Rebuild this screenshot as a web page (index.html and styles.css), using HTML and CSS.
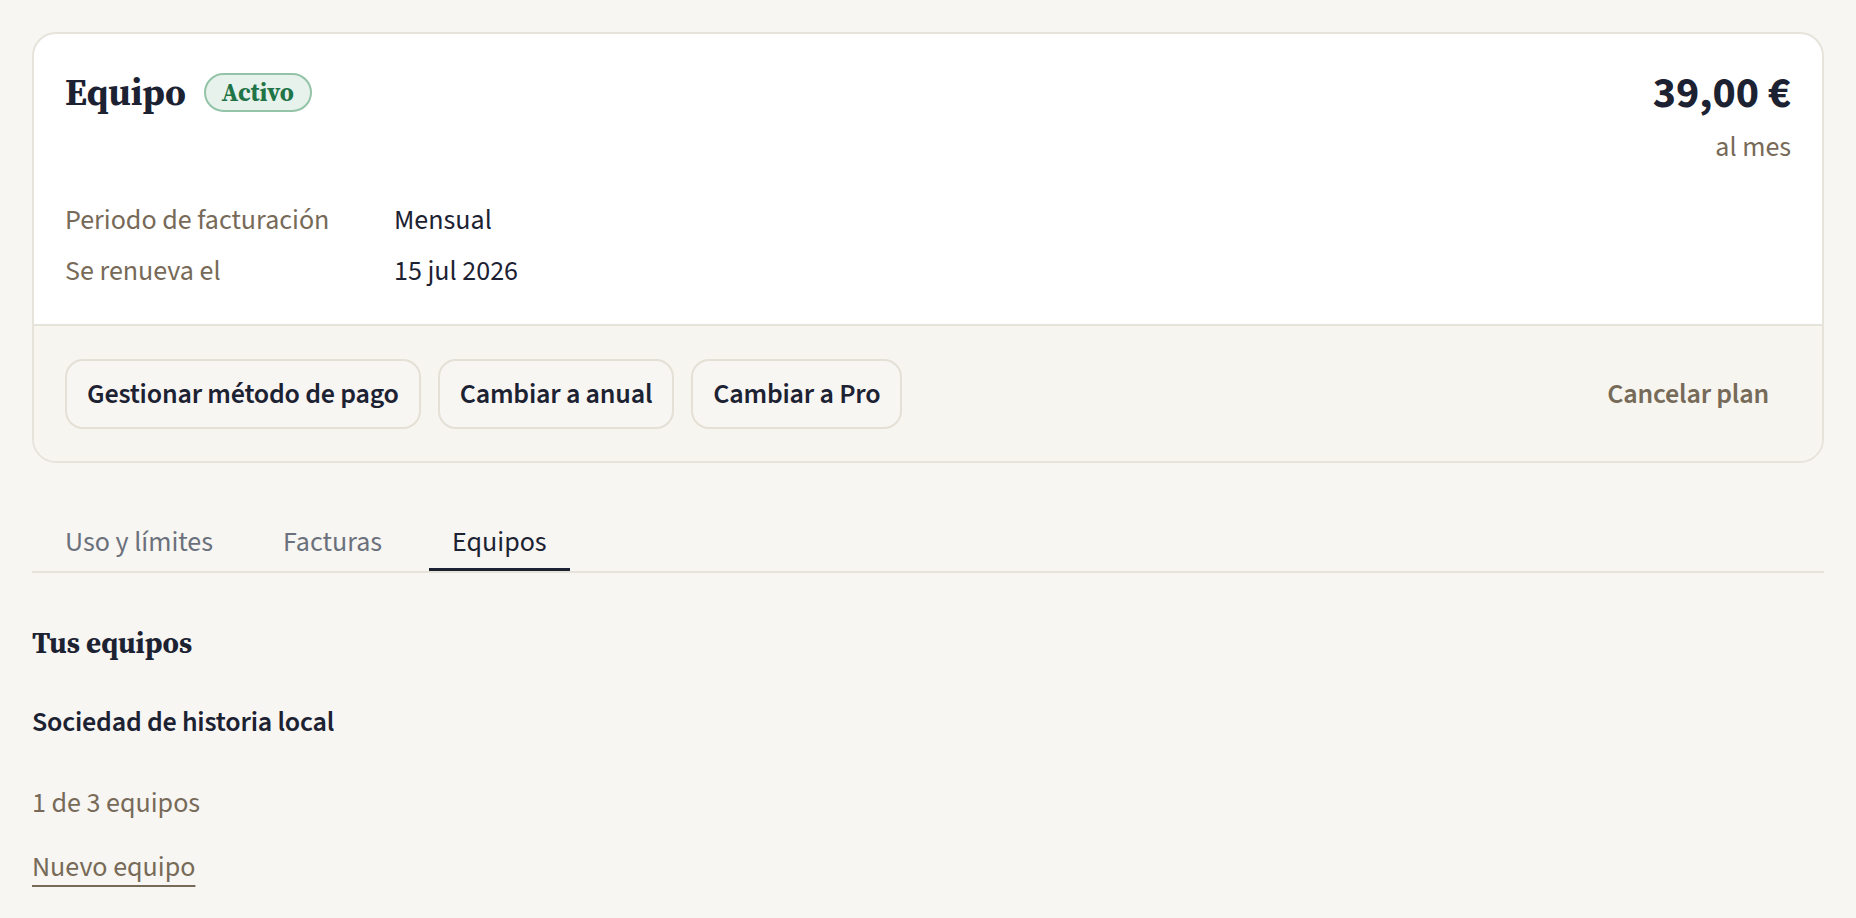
FILE: index.html
```html
<!DOCTYPE html>
<html lang="es">
<head>
  <meta charset="utf-8">
  <link rel="stylesheet" href="styles.css">
</head>
<body>
  <div class="page">
    <section class="plan-card">
      <div class="plan-main">
        <div class="plan-head">
          <div class="plan-title">
            <h1>Equipo</h1>
            <span class="badge">Activo</span>
          </div>
          <div class="plan-price">
            <div class="amount">39,00&nbsp;€</div>
            <div class="period">al mes</div>
          </div>
        </div>

        <dl class="plan-details">
          <div class="detail-row">
            <dt>Periodo de facturación</dt>
            <dd>Mensual</dd>
          </div>
          <div class="detail-row">
            <dt>Se renueva el</dt>
            <dd>15 jul 2026</dd>
          </div>
        </dl>
      </div>

      <div class="plan-actions">
        <button type="button" class="btn">Gestionar método de pago</button>
        <button type="button" class="btn">Cambiar a anual</button>
        <button type="button" class="btn">Cambiar a Pro</button>
        <button type="button" class="btn btn-ghost">Cancelar plan</button>
      </div>
    </section>

    <nav class="tabs">
      <a href="#" class="tab">Uso y límites</a>
      <a href="#" class="tab">Facturas</a>
      <a href="#" class="tab active">Equipos</a>
    </nav>

    <section class="teams">
      <h2>Tus equipos</h2>
      <p class="team-name">Sociedad de historia local</p>
      <p class="team-count">1 de 3 equipos</p>
      <a href="#" class="new-team">Nuevo equipo</a>
    </section>
  </div>
</body>
</html>
```

FILE: styles.css
```css
body {
  margin: 0;
  background-color: #f7f6f2;
  color: #1c2232;
  font-family: "Source Sans 3", Lato, "Noto Sans", sans-serif;
  font-size: 28px;
  line-height: 1.5;
}

.page {
  padding: 32px;
}

h1,
h2 {
  font-family: "Source Serif 4", "Liberation Serif", serif;
  font-weight: 700;
  margin: 0;
}

p {
  margin: 0;
}

.plan-card {
  background-color: #fff;
  border: 2px solid #e6e3da;
  border-radius: 24px;
  overflow: hidden;
}

.plan-main {
  padding: 36px 31px 32px;
}

.plan-head {
  display: flex;
  justify-content: space-between;
  align-items: flex-start;
}

.plan-title {
  display: flex;
  align-items: center;
  gap: 17.5px;
}

.plan-title h1 {
  font-size: 37px;
  line-height: 1.2;
}

.badge {
  font-family: "Source Serif 4", "Liberation Serif", serif;
  font-weight: 700;
  font-size: 25px;
  line-height: 35px;
  padding: 0 16px;
  color: #1f7448;
  background-color: #e8f2ec;
  border: 2px solid #93c3a8;
  border-radius: 999px;
}

.plan-price {
  text-align: right;
}

.amount {
  font-size: 44px;
  font-weight: 700;
  line-height: 1.1;
}

.period {
  margin-top: 8px;
  color: #776a58;
}

.plan-details {
  margin: 31px 0 0;
  display: flex;
  flex-direction: column;
  gap: 9px;
}

.detail-row {
  display: grid;
  grid-template-columns: 329px 1fr;
}

.detail-row dt {
  color: #776a58;
}

.detail-row dd {
  margin: 0;
}

.plan-actions {
  display: flex;
  gap: 17px;
  padding: 33px 31px 32px;
  background-color: #f6f5f0;
  border-top: 2px solid #e6e3da;
}

.btn {
  height: 70px;
  padding: 0 20px;
  font-family: inherit;
  font-size: 28px;
  font-weight: 600;
  letter-spacing: -0.2px;
  color: #1c2232;
  background-color: #f7f6f2;
  border: 2px solid #e4e0d6;
  border-radius: 18px;
  cursor: pointer;
}

.btn-ghost {
  margin-left: auto;
  color: #766a58;
  background: none;
  border-color: transparent;
}

.tabs {
  display: flex;
  gap: 24px;
  margin-top: 57px;
  padding-left: 10px;
  border-bottom: 2px solid #e6e3da;
}

.tab {
  padding: 1px 23px 5px;
  color: #6b717c;
  text-decoration: none;
  border-bottom: 3px solid transparent;
}

.tab.active {
  color: #1c2232;
  border-bottom-color: #1c2232;
}

.teams {
  padding-top: 52px;
}

.teams h2 {
  font-size: 29px;
  line-height: 1.3;
}

.team-name {
  margin-top: 38px;
  font-weight: 600;
  letter-spacing: -0.2px;
}

.team-count {
  margin-top: 39px;
  color: #776a58;
}

.new-team {
  display: inline-block;
  margin-top: 22px;
  color: #776a58;
  text-decoration: underline;
  text-decoration-thickness: 2px;
  text-underline-offset: 9px;
}
```
